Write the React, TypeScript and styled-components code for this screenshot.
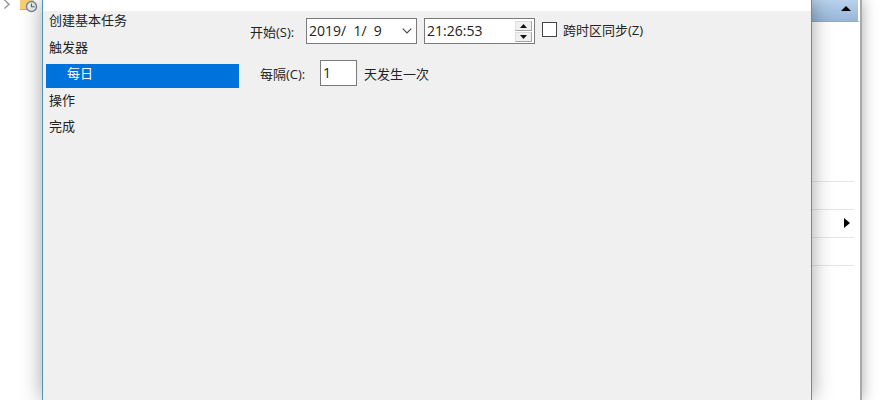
import React from "react";
import styled, { createGlobalStyle } from "styled-components";

const GlobalStyle = createGlobalStyle`
  *, *::before, *::after { box-sizing: border-box; }
  html, body { margin: 0; background: #fff; }
  body, button, input {
    font-family: "Open Sans", "Noto Sans CJK SC", sans-serif;
    font-size: 13px;
    color: #222;
  }
`;

const Desktop = styled.div`
  display: flex;
  min-height: 100vh;
  overflow: hidden;
  background: #fff;
`;

const TreePane = styled.aside`
  flex: 0 0 42px;
  display: flex;
  align-items: flex-start;
  gap: 7px;
  padding-left: 2px;
`;

const Dialog = styled.main`
  position: relative;
  z-index: 2;
  flex: 1;
  min-width: 0;
  background: #f0f0f0;
  border: solid #4f94bb;
  border-width: 0 1px;
  box-shadow: 0 0 20px rgba(0, 0, 0, 0.36);
`;

const DialogHeader = styled.div`
  height: 11px;
  background: #fff;
`;

const DialogBody = styled.div`
  display: flex;
  align-items: flex-start;
`;

const Steps = styled.ul`
  flex: 0 0 196px;
  display: flex;
  flex-direction: column;
  gap: 3px;
  margin: 0;
  padding: 0 0 0 3px;
  list-style: none;
`;

const Step = styled.li<{ $current?: boolean }>`
  height: ${(p) => (p.$current ? 24 : 23)}px;
  padding-left: ${(p) => (p.$current ? 21 : 3)}px;
  line-height: 18px;
  white-space: nowrap;
  color: ${(p) => (p.$current ? "#fff" : "#222")};
  background: ${(p) => (p.$current ? "#0072db" : "transparent")};

  &:first-child { height: 24px; }
`;

const Form = styled.form`
  flex: 1;
  display: flex;
  flex-direction: column;
  gap: 16px;
  padding: 7px 10px;
  white-space: nowrap;
`;

const Row = styled.div<{ $indent?: boolean }>`
  display: flex;
  align-items: center;
  height: 26px;
  padding-left: ${(p) => (p.$indent ? 11 : 1)}px;
`;

const Label = styled.label<{ $width: number }>`
  flex: 0 0 ${(p) => p.$width}px;
`;

const Field = styled.div<{ $width: number }>`
  flex: 0 0 ${(p) => p.$width}px;
  min-width: 0;
  display: flex;
  align-items: center;
  height: 26px;
  margin-right: 7px;
  background: #fff;
  border: 1px solid #7a7a7a;
`;

const TextInput = styled.input`
  flex: 1;
  width: 100%;
  min-width: 0;
  height: 24px;
  padding: 0 0 2px 2px;
  border: 0;
  outline: 0;
  background: transparent;
  font-size: 14px;
`;

const DropButton = styled.button`
  display: flex;
  align-items: center;
  justify-content: center;
  width: 19px;
  height: 24px;
  padding: 0;
  border: 0;
  background: transparent;
`;

const Spinner = styled.div`
  display: flex;
  flex-direction: column;
  gap: 1px;
  padding-right: 2px;
`;

const SpinButton = styled.button`
  display: flex;
  align-items: center;
  justify-content: center;
  width: 17px;
  height: 10px;
  padding: 0;
  background: #f0f0f0;
  border: 1px solid #a4a4a4;
  border-top-color: #ddd;
  border-left-color: #ddd;
`;

const Checkbox = styled.input`
  appearance: none;
  width: 15px;
  height: 15px;
  margin: 0 6px 0 0;
  background: #fff;
  border: 1px solid #444;
`;

const CheckLabel = styled.label`
  display: flex;
  align-items: center;
  height: 22px;
  margin-bottom: 3px;
`;

const ActionsPane = styled.aside`
  flex: 0 0 50px;
  position: relative;
  z-index: 1;
  background: #fff;
  border-right: 2px solid #a9a9a9;
  box-shadow: 0 0 14px rgba(0, 0, 0, 0.35);
`;

const ActionsTitle = styled.button`
  display: flex;
  justify-content: flex-end;
  width: 100%;
  height: 22px;
  padding: 6px 7px 0 0;
  border: 0;
  border-bottom: 1px solid #9aa9ba;
  border-right: 2px solid #fff;
  background: linear-gradient(#b9d2ec, #98b5d8);
`;

const ActionList = styled.ul`
  margin: 159px 6px 0 0;
  padding: 0;
  list-style: none;
  border-top: 1px solid #e6e6e6;
`;

const ActionItem = styled.li`
  display: flex;
  align-items: center;
  justify-content: flex-end;
  height: 28px;
  padding: 0 4px 2px 0;
  border-bottom: 1px solid #e6e6e6;
`;

const Outside = styled.div`
  flex: 0 0 27px;
`;

const SubmenuButton = styled.button`
  display: flex;
  padding: 0;
  border: 0;
  background: transparent;
`;

const steps = [
  { name: "创建基本任务" },
  { name: "触发器" },
  { name: "每日", current: true },
  { name: "操作" },
  { name: "完成" },
];

const TaskFolderIcon = () => (
  <svg width="19" height="13" viewBox="0 0 19 13" aria-hidden="true">
    <path d="M1 0h14v10H1z" fill="#f6cf73" />
    <path d="M1 9h9v1H1z" fill="#dfae4d" />
    <circle cx="12.5" cy="6.5" r="5" fill="#e9f0f3" stroke="#7d8a90" strokeWidth="1.4" />
    <path d="M12.5 3.5v3.2h3" fill="none" stroke="#56656d" strokeWidth="1.1" />
  </svg>
);

const SmallTriangle = ({ down }: { down?: boolean }) => (
  <svg width="7" height="4" viewBox="0 0 7 4" aria-hidden="true">
    <path d={down ? "M0 0h7L3.5 4z" : "M0 4h7L3.5 0z"} fill="#111" />
  </svg>
);

export default function App() {
  return (
    <>
      <GlobalStyle />
      <Desktop>
        <TreePane>
          <svg width="10" height="10" viewBox="0 0 10 10" aria-hidden="true">
            <path d="M2.5 0L7 4.2L2.5 8.5" fill="none" stroke="#999" strokeWidth="1.5" />
          </svg>
          <TaskFolderIcon />
        </TreePane>
        <Dialog>
          <DialogHeader />
          <DialogBody>
            <Steps>
              {steps.map((s) => (
                <Step key={s.name} $current={s.current} aria-current={s.current ? "step" : undefined}>
                  {s.name}
                </Step>
              ))}
            </Steps>
            <Form>
              <Row>
                <Label $width={56} htmlFor="start">开始(S):</Label>
                <Field $width={111}>
                  <TextInput id="start" defaultValue="2019/  1/  9" />
                  <DropButton type="button" aria-label="选择日期">
                    <svg width="10" height="6" viewBox="0 0 10 6" aria-hidden="true">
                      <path d="M.7.7L5 5L9.3.7" fill="none" stroke="#444" strokeWidth="1.1" />
                    </svg>
                  </DropButton>
                </Field>
                <Field $width={111}>
                  <TextInput aria-label="时间" defaultValue="21:26:53" />
                  <Spinner>
                    <SpinButton type="button" aria-label="增加"><SmallTriangle /></SpinButton>
                    <SpinButton type="button" aria-label="减少"><SmallTriangle down /></SpinButton>
                  </Spinner>
                </Field>
                <CheckLabel>
                  <Checkbox type="checkbox" />
                  跨时区同步(Z)
                </CheckLabel>
              </Row>
              <Row $indent>
                <Label $width={60} htmlFor="interval">每隔(C):</Label>
                <Field $width={37}>
                  <TextInput id="interval" defaultValue="1" />
                </Field>
                <Label $width={80} htmlFor="interval">天发生一次</Label>
              </Row>
            </Form>
          </DialogBody>
        </Dialog>
        <ActionsPane>
          <ActionsTitle type="button" aria-label="折叠">
            <svg width="10" height="5" viewBox="0 0 10 5" aria-hidden="true">
              <path d="M0 5L5 0l5 5z" fill="#000" />
            </svg>
          </ActionsTitle>
          <ActionList>
            <ActionItem />
            <ActionItem>
              <SubmenuButton type="button" aria-label="展开">
                <svg width="6" height="10" viewBox="0 0 6 10" aria-hidden="true">
                  <path d="M0 0l6 5l-6 5z" fill="#000" />
                </svg>
              </SubmenuButton>
            </ActionItem>
            <ActionItem />
          </ActionList>
        </ActionsPane>
        <Outside />
      </Desktop>
    </>
  );
}
